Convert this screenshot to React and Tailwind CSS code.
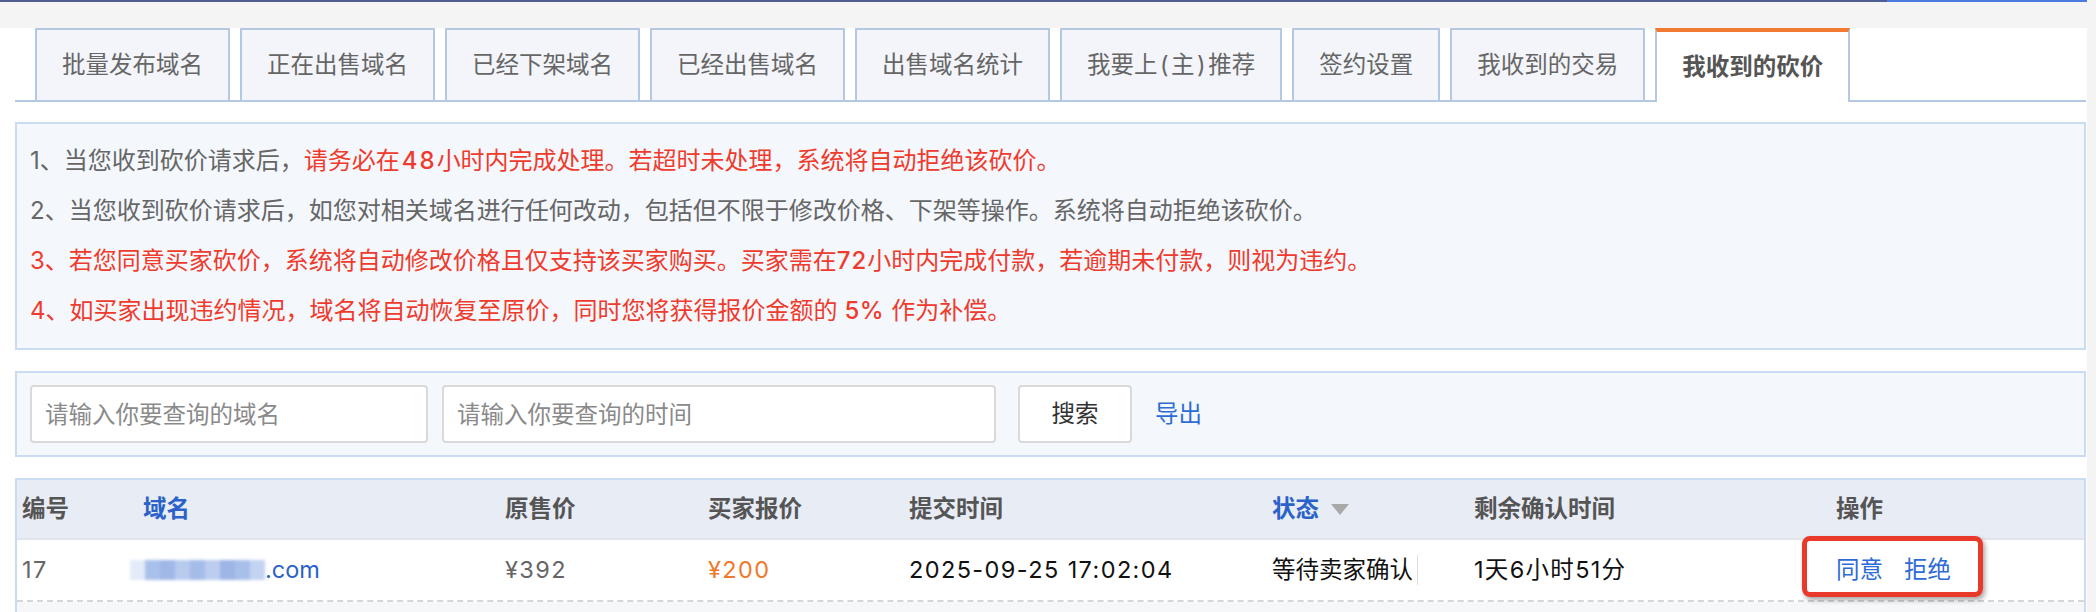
const tabs = ["批量发布域名", "正在出售域名", "已经下架域名", "已经出售域名", "出售域名统计", "我要上(主)推荐", "签约设置", "我收到的交易"];

const font = { fontFamily: "Inter, 'Noto Sans CJK SC', sans-serif" };

// parens in the reference font are wider than Inter's
function Label({ text }) {
    const parts = text.split(/([()])/);
    return <>{parts.map((p, i) => p === "(" || p === ")"
        ? <span key={i} className="inline-block px-[2.5px]">{p}</span>
        : <span key={i}>{p}</span>)}</>
}

function Tab({ label, active }) {
    if (active) {
        return <div className="h-[74px] -mb-[2px] px-[25px] flex items-center border-x-2 border-t-4 border-x-[#b4c8e4] border-t-[#ef7a30] bg-white font-bold text-[#555]">
            {label}
        </div>
    }
    return <div className="h-[72px] px-[25px] flex items-center border-x-2 border-t-2 border-[#b4c8e4] bg-[#f3f5fa] text-[#666]">
        <Label text={label} />
    </div>
}

function Blurred() {
    const shades = ["#e4ebf8", "#a9c0ea", "#9fb8e7", "#b8cbef", "#a4bce8", "#bccdf0", "#9db6e6", "#a8bfea", "#c3d3f2"];
    return <span className="inline-flex h-[20px] blur-[1.5px]">
        {shades.map((c, i) => <span key={i} className="w-[15px] h-full" style={{ background: c }} />)}
    </span>
}

const cols = "grid grid-cols-[121px_362px_203px_201px_363px_202px_362px_1fr] pl-[5px]";

export default function App() {
    return <div className="flex w-[2096px] h-[612px] bg-[#f4f4f4] text-[23.5px] overflow-hidden" style={font}>
        <div className="w-[2087px] shrink-0 flex flex-col">
            <div className="flex h-[2px] shrink-0">
                <div className="flex-1 bg-[#4f5d92]" />
                <div className="w-[200px] bg-[#4a7be0]" />
            </div>
            <div className="h-[26px] shrink-0" />
            <div className="flex-1 shrink-0 bg-white pl-[15px] pr-px">
                {/* tabs */}
                <div className="flex items-end gap-[10px] pl-[20px] border-b-2 border-[#b4c8e4]">
                    {tabs.map(t => <Tab key={t} label={t} />)}
                    <Tab label="我收到的砍价" active />
                </div>

                {/* notice */}
                <div className="mt-[20px] border-2 border-[#cbdcf2] bg-[#f4f7fc] px-[13px] py-[12px] text-[24px] leading-[50px] text-[#666]">
                    <div>1、当您收到砍价请求后，<span className="text-[#ef3b2d]">请务必在<span className="font-medium tracking-[2px] pl-[2px]">48</span>小时内完成处理。若超时未处理，系统将自动拒绝该砍价。</span></div>
                    <div>2、当您收到砍价请求后，如您对相关域名进行任何改动，包括但不限于修改价格、下架等操作。系统将自动拒绝该砍价。</div>
                    <div className="text-[#ef3b2d]">3、若您同意买家砍价，系统将自动修改价格且仅支持该买家购买。买家需在<span className="font-medium tracking-[1px]">72</span>小时内完成付款，若逾期未付款，则视为违约。</div>
                    <div className="text-[#ef3b2d]">4、如买家出现违约情况，域名将自动恢复至原价，同时您将获得报价金额的<span className="inline-block px-[7px] font-medium tracking-[0.5px]">5%</span>作为补偿。</div>
                </div>

                {/* search */}
                <div className="mt-[21px] border-2 border-[#cbdcf2] bg-[#f4f7fc] px-[13px] py-[12px] flex items-center">
                    <input placeholder="请输入你要查询的域名" className="w-[398px] h-[58px] rounded-[4px] border-2 border-[#d9d9d9] bg-white px-[13px] outline-none placeholder:text-[#8a8a8a]" />
                    <input placeholder="请输入你要查询的时间" className="ml-[14px] w-[554px] h-[58px] rounded-[4px] border-2 border-[#d9d9d9] bg-white px-[13px] outline-none placeholder:text-[#8a8a8a]" />
                    <button className="ml-[22px] w-[114px] h-[58px] rounded-[4px] border-2 border-[#d9d9d9] bg-white text-[#333]">搜索</button>
                    <span className="ml-[23px] text-[#2d6bd6]">导出</span>
                </div>

                {/* table */}
                <div className="mt-[21px] border-x-2 border-t-2 border-[#cbdcf2]">
                    <div className={`${cols} h-[60px] items-center bg-[#e8ecf5] font-bold text-[#555] border-b-2 border-[#e2e5eb]`}>
                        <div>编号</div>
                        <div className="text-[#2a62c9]">域名</div>
                        <div>原售价</div>
                        <div>买家报价</div>
                        <div>提交时间</div>
                        <div className="flex items-center gap-[12px]">
                            <span className="text-[#2a62c9]">状态</span>
                            <svg width="18" height="11" viewBox="0 0 18 11"><path d="M0 0h18L9 11z" fill="#a9a9a9" /></svg>
                        </div>
                        <div>剩余确认时间</div>
                        <div>操作</div>
                    </div>
                    <div className={`${cols} h-[62px] items-center bg-white border-b-2 border-dashed border-[#d6d6d6]`}>
                        <div className="text-[#666] tracking-[1.4px]">17</div>
                        <div className="flex items-center -ml-[13px]">
                            <Blurred />
                            <span className="text-[#2a62c9]">.com</span>
                        </div>
                        <div className="text-[#666] tracking-[1.4px]">¥392</div>
                        <div className="text-[#f07a2b] tracking-[1.4px]">¥200</div>
                        <div className="text-[#111] tracking-[1.4px]">2025-09-25 17:02:04</div>
                        <div className="text-[#111] flex items-center">
                            <span>等待卖家确认</span>
                            <span className="ml-[4px] w-px h-[30px] bg-[#ddd]" />
                        </div>
                        <div className="text-[#111] tracking-[1.3px]">1天6小时51分</div>
                        <div className="relative flex items-center gap-[21px] text-[#2d6bd6]">
                            <span>同意</span>
                            <span>拒绝</span>
                            <div className="absolute -left-[34px] top-[-16px] w-[181px] h-[61px] rounded-[8px] border-[5px] border-[#e8392b] shadow-[2px_3px_5px_rgba(0,0,0,0.35)]" />
                        </div>
                    </div>
                    <div className="h-[20px] bg-[#f6f7f9]" />
                </div>
            </div>
        </div>
    </div>
}
